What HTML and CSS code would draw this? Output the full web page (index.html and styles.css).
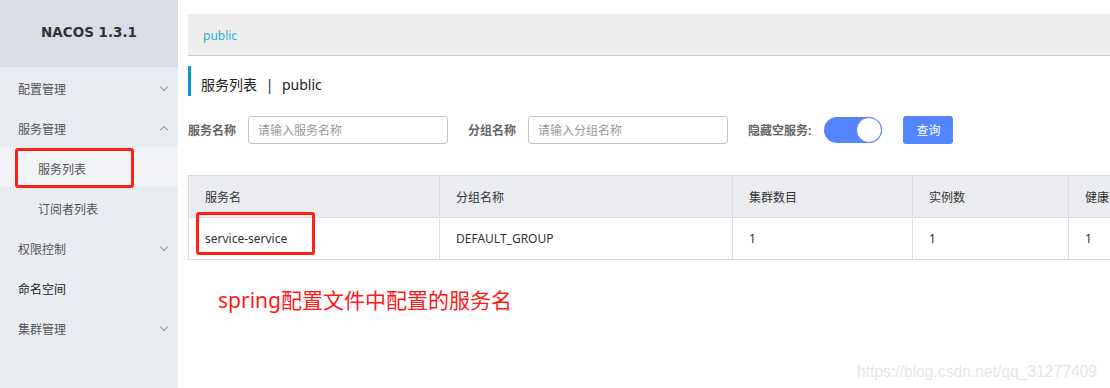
FILE: index.html
```html
<!DOCTYPE html>
<html lang="en">
<head>
  <meta charset="UTF-8" />
  <meta name="viewport" content="width=device-width, initial-scale=1.0"/>
  <title>Nacos 服务列表</title>
  <link rel="stylesheet" href="styles.css">
</head>
<body>

  <div class="layout">
    <aside class="sidebar">
      <div class="brand">NACOS 1.3.1</div>
      <ul class="menu">
        <li class="menu-item">配置管理<span class="chev down"></span></li>
        <li class="menu-item">服务管理<span class="chev up"></span></li>
        <li class="menu-item sub active">服务列表<span class="mark mark-nav"></span></li>
        <li class="menu-item sub">订阅者列表</li>
        <li class="menu-item">权限控制<span class="chev down"></span></li>
        <li class="menu-item dark">命名空间</li>
        <li class="menu-item">集群管理<span class="chev down"></span></li>
      </ul>
    </aside>

    <main class="main">
      <div class="ns-bar"><span class="ns-link">public</span></div>

      <h3 class="page-title">服务列表 <span class="sep">|</span> public</h3>

      <form class="search" action="#">
        <label class="field-label">服务名称</label>
        <input type="text" class="field" placeholder="请输入服务名称">
        <label class="field-label">分组名称</label>
        <input type="text" class="field" placeholder="请输入分组名称">
        <label class="field-label switch-label">隐藏空服务:</label>
        <span class="switch"><span class="knob"></span></span>
        <button type="button" class="btn">查询</button>
      </form>

      <table class="grid">
        <thead>
          <tr>
            <th class="c1">服务名</th>
            <th class="c2">分组名称</th>
            <th class="c3">集群数目</th>
            <th class="c4">实例数</th>
            <th class="c5">健康实例数</th>
          </tr>
        </thead>
        <tbody>
          <tr>
            <td class="c1">service-service<span class="mark mark-cell"></span></td>
            <td>DEFAULT_GROUP</td>
            <td>1</td>
            <td>1</td>
            <td>1</td>
          </tr>
        </tbody>
      </table>

      <p class="note">spring配置文件中配置的服务名</p>

      <span class="watermark">https://blog.csdn.net/qq_31277409</span>
    </main>
  </div>

</body>
</html>
```

FILE: styles.css
```css
* {
  box-sizing: border-box;
}

body {
  margin: 0;
  font-family: "Noto Sans", "Noto Sans CJK SC", sans-serif;
  font-size: 12px;
  color: #333;
  background-color: #fff;
  overflow: hidden;
}

.layout {
  display: flex;
  height: 388px;
}

/* sidebar */
.sidebar {
  width: 178px;
  flex: 0 0 178px;
  background-color: #e9ecf1;
}

.brand {
  height: 67px;
  line-height: 64px;
  text-align: center;
  background-color: #d9dde5;
  font-family: "DejaVu Sans", sans-serif;
  font-weight: bold;
  font-size: 13.5px;
  color: #333;
}

.menu {
  list-style: none;
  margin: 0;
  padding: 0;
}

.menu-item {
  position: relative;
  height: 40px;
  line-height: 45px;
  padding-left: 18px;
  color: #555;
}

.menu-item.sub {
  padding-left: 38px;
}

.menu-item.active {
  background-color: #f2f3f7;
}

.menu-item.dark {
  color: #222;
}

.chev {
  position: absolute;
  right: 11px;
  top: 17px;
  width: 6px;
  height: 6px;
  border-right: 1px solid #999;
  border-bottom: 1px solid #999;
}

.chev.down {
  transform: rotate(45deg);
}

.chev.up {
  top: 20px;
  transform: rotate(-135deg);
}

/* red annotation boxes */
.mark {
  position: absolute;
  border: 3px solid #ff2015;
  border-radius: 3px;
}

.mark-nav {
  left: 15px;
  top: 1px;
  width: 119px;
  height: 40px;
}

.mark-cell {
  left: 7px;
  top: -6px;
  width: 119px;
  height: 43px;
}

/* main */
.main {
  position: relative;
  flex: 1;
  padding: 14px 0 0 10px;
  overflow: hidden;
}

.ns-bar {
  height: 42px;
  line-height: 43px;
  padding-left: 15px;
  background-color: #eee;
  border-bottom: 1px solid #ccc;
}

.ns-link {
  color: #2bb0d6;
}

.page-title {
  margin: 10px 0 0;
  height: 30px;
  line-height: 38px;
  padding-left: 10px;
  border-left: 3px solid #09c;
  font-size: 14px;
  font-weight: normal;
  color: #222;
}

.sep {
  margin: 0 5px;
}

.search {
  display: flex;
  align-items: center;
  margin-top: 20px;
  height: 28px;
}

.field-label {
  font-weight: bold;
  color: #666;
  margin-right: 12px;
}

.switch-label {
  margin-right: 13px;
}

.field {
  width: 200px;
  height: 28px;
  padding: 0 9px;
  border: 1px solid #c4c6cf;
  border-radius: 3px;
  font-family: inherit;
  font-size: 12px;
  margin-right: 20px;
}

.field::placeholder {
  color: #999;
}

.switch {
  position: relative;
  width: 58px;
  height: 26px;
  border-radius: 13px;
  background-color: #5584ff;
}

.knob {
  position: absolute;
  right: 0;
  top: 0;
  width: 26px;
  height: 26px;
  border-radius: 50%;
  background-color: #fff;
  border: 1px solid #5584ff;
}

.btn {
  width: 50px;
  height: 28px;
  margin-left: 21px;
  border: none;
  border-radius: 3px;
  background-color: #5584ff;
  color: #fff;
  font-family: inherit;
  font-size: 12px;
}

.grid {
  margin-top: 31px;
  width: 1060px;
  border-collapse: collapse;
  table-layout: fixed;
}

.grid th,
.grid td {
  height: 42px;
  padding: 0 16px;
  border: 1px solid #dcdee3;
  text-align: left;
  font-weight: normal;
  white-space: nowrap;
  overflow: hidden;
}

.grid td.c1 {
  position: relative;
  overflow: visible;
}

.grid th {
  background-color: #ebecf0;
  color: #333;
}

.grid td {
  color: #333;
}

.c1 { width: 251px; }
.c2 { width: 293px; }
.c3 { width: 180px; }
.c4 { width: 156px; }
.c5 { width: 180px; }

.note {
  margin: 25px 0 0 30px;
  font-size: 21px;
  line-height: 30px;
  color: #ff1a1a;
  white-space: nowrap;
}

.watermark {
  position: absolute;
  left: 679px;
  bottom: 6px;
  font-family: "Liberation Sans", sans-serif;
  font-size: 17px;
  color: #e6e6e6;
  transform: scaleX(0.92);
  transform-origin: left;
  white-space: nowrap;
}
```
